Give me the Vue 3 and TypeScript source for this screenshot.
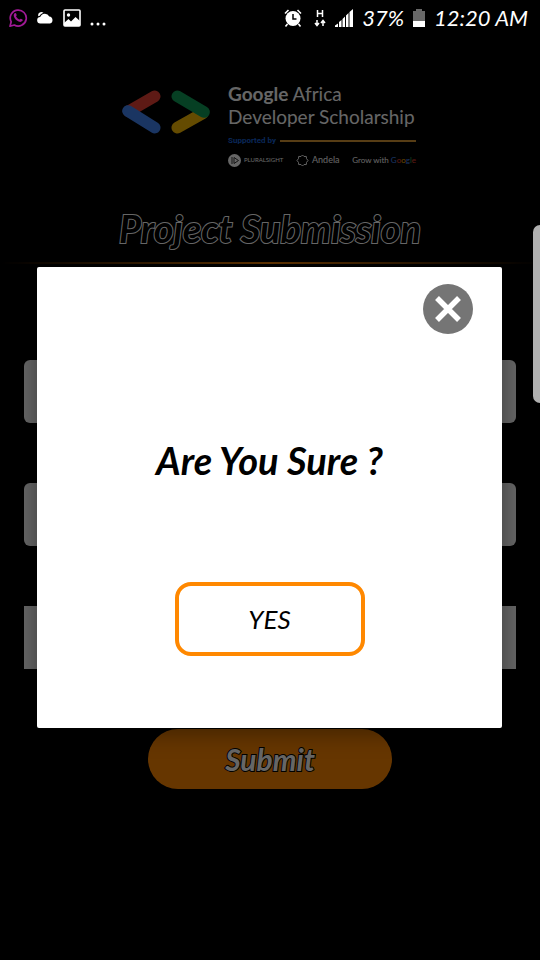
<script setup lang="ts">
import { ref } from 'vue'

const open = ref(true)
const fields = [
  { id: 'first', label: 'First name', square: false },
  { id: 'last', label: 'Last name', square: false },
  { id: 'email', label: 'Email address', square: true },
]
</script>

<template>
  <div class="screen">
    <header class="status">
      <div class="status-group left">
        <svg class="icon chat" width="20" height="20" viewBox="0 0 20 20" fill="none">
          <path d="M2 18.2l1.2-4.4A8 8 0 1 1 6.300 17z" stroke="#a11a96" stroke-width="1.700" stroke-linejoin="round" />
          <path d="M6.600 5.300c.6-.6 1.200-.4 1.500.2l.6 1.400c.2.500-.6 1-.7 1.400.7 1.500 1.900 2.700 3.400 3.300.5-.1 1-1.100 1.500-.9l1.500.8c.6.400.3 1.200-.1 1.600-1 1-2.300 1-3.700.4C8.200 12.500 6.600 10.700 5.900 8.500c-.4-1.300-.1-2.400.7-3.200z" fill="#a11a96" />
        </svg>
        <svg class="icon" width="17" height="12" viewBox="0 0 17 12" fill="#fff">
          <path d="M3.500 11.500a3.200 3.200 0 0 1-.3-6.400A5 5 0 0 1 12.300 4.500 3.600 3.600 0 0 1 13 11.500z" />
          <path d="M1.300 4.200A3.200 3.200 0 0 1 6.600 1C4.700 1.300 3.400 2.300 2.700 3.800z" />
        </svg>
        <svg class="icon" width="18" height="18" viewBox="0 0 18 18">
          <rect x="1" y="1" width="16" height="16" rx="1" fill="none" stroke="#fff" stroke-width="1.600" />
          <circle cx="5.500" cy="6" r="1.700" fill="#fff" />
          <path d="M1 14l4.500-4 2.500 2.500L12.500 8 17 12v5H1z" fill="#fff" />
        </svg>
        <svg class="icon dots" width="16" height="4" viewBox="0 0 16 4" fill="#fff">
          <circle cx="2" cy="2" r="1.500" /><circle cx="8" cy="2" r="1.500" /><circle cx="14" cy="2" r="1.500" />
        </svg>
      </div>
      <div class="status-group right">
        <svg class="icon" width="18" height="18" viewBox="0 0 18 18">
          <circle cx="9" cy="9.500" r="7.500" fill="#fff" />
          <path d="M1 4.500L4.500 1M17 4.500L13.500 1M3.500 15L1.500 17.500M14.500 15l2 2.500" stroke="#fff" stroke-width="1.600" />
          <path d="M9 5v5h3.500" fill="none" stroke="#000" stroke-width="1.500" />
        </svg>
        <svg class="icon data" width="12" height="18" viewBox="0 0 12 18" fill="none" stroke="#fff" stroke-width="1.500">
          <path d="M3.500 1v7M8.500 1v7M3.500 4.500h5" />
          <path d="M3 11v5M1 14l2 2.500L5 14M9 17v-5M7 14l2-2.500 2 2.500" />
        </svg>
        <svg class="icon" width="18" height="18" viewBox="0 0 18 18" fill="#fff">
          <path d="M0 16.500l3-2V18H0zM4 13l2.500-2v7H4zM7.500 10L10 7.500V18H7.500zM11 6.500L13.500 4v14H11zM14.500 3L18 0v18h-3.500z" />
        </svg>
        <span class="status-text">37%</span>
        <svg class="icon" width="12" height="18" viewBox="0 0 12 18">
          <path d="M3 0h6v2h3v16H0V2h3z" fill="#686868" />
          <path d="M0 12h12v6H0z" fill="#fff" />
        </svg>
        <time class="status-text">12:20 AM</time>
      </div>
    </header>

    <main class="page">
      <div class="brand">
        <svg class="mark" width="88" height="44" viewBox="36 46 264 132" fill="none" stroke-width="35" stroke-linecap="round">
          <path d="M134 65L56 110" stroke="#ea4335" />
          <path d="M54 109L134 159" stroke="#4285f4" />
          <path d="M202 159L278 116" stroke="#fbbc04" />
          <path d="M202 65L282 112" stroke="#0f9d58" />
        </svg>
        <div class="brand-text">
          <p class="brand-name"><b>Google</b> Africa<br />Developer Scholarship</p>
          <div class="support"><span>Supported by</span><i class="rule"></i></div>
          <div class="partners">
            <span class="partner">
              <svg width="13" height="13" viewBox="0 0 13 13">
                <circle cx="6.500" cy="6.500" r="6.500" fill="#fff" />
                <path d="M4 3v7M6 3.500l4.500 3L6 9.500z" fill="none" stroke="#333" />
              </svg>
              <span class="plural">PLURALSIGHT</span>
            </span>
            <span class="partner">
              <svg width="13" height="13" viewBox="0 0 13 13" fill="none" stroke="#fff">
                <path d="M6.500 1l1.500 1.500 2.300-.1.200 2.200L12 6.500l-1.500 1.900-.2 2.200-2.300-.1L6.500 12 5 10.500l-2.300.1-.2-2.200L1 6.500l1.500-1.900.2-2.200 2.300.1z" />
              </svg>
              <span>Andela</span>
            </span>
            <span class="grow">Grow with <span class="blue">G</span><span class="red">o</span><span class="yellow">o</span><span class="blue">g</span><span class="green">l</span><span class="red">e</span></span>
          </div>
        </div>
      </div>

      <h1 class="title">Project Submission</h1>
      <div class="divider"></div>

      <form class="form" @submit.prevent="open = true">
        <input
          v-for="f in fields"
          :id="f.id"
          :key="f.id"
          class="field"
          :class="{ square: f.square }"
          type="text"
          :aria-label="f.label"
        />
        <button class="submit" type="submit">Submit</button>
      </form>
    </main>

    <div v-if="open" class="overlay">
      <section class="dialog" role="dialog" aria-modal="true" aria-labelledby="question">
        <button class="close" type="button" aria-label="Close" @click="open = false">
          <svg width="50" height="50" viewBox="0 0 50 50">
            <circle cx="25" cy="25" r="25" fill="#757575" />
            <path d="M14 14l22 22M36 14l-22 22" stroke="#fff" stroke-width="5.500" />
          </svg>
        </button>
        <h2 id="question" class="question">Are You Sure ?</h2>
        <button class="yes" type="button" @click="open = false">YES</button>
      </section>
    </div>
    <div class="edge-handle"></div>
  </div>
</template>

<style>
body {
  margin: 0;
  background: #000;
}
</style>

<style scoped>
.screen {
  position: relative;
  min-height: 100vh;
  overflow: hidden;
  box-sizing: border-box;
  background: #000;
  color: #fff;
  font-family: Lato, "Open Sans", sans-serif;
}
.status {
  display: flex;
  justify-content: space-between;
  align-items: center;
  height: 36px;
  padding: 0 12px 0 8px;
}
.status-group {
  display: flex;
  align-items: center;
  gap: 9px;
}
.icon {
  display: block;
  flex: none;
}
.dots {
  align-self: flex-end;
  margin-bottom: 2px;
}
.data {
  margin-left: 3px;
}
.status-text {
  font-size: 22px;
  line-height: 24px;
  font-style: italic;
  white-space: nowrap;
}
.page {
  display: flex;
  flex-direction: column;
}
.brand {
  display: flex;
  justify-content: center;
  gap: 18px;
  padding: 46px 2px 0 0;
}
.mark {
  margin-top: 8px;
}
.brand-text {
  width: 188px;
}
.brand-name {
  margin: 0;
  font-size: 19px;
  line-height: 23px;
  white-space: nowrap;
}
.support {
  display: flex;
  align-items: center;
  gap: 4px;
  height: 12px;
  margin-top: 7px;
  color: #1a63d8;
  font: bold 8px/12px Roboto, sans-serif;
}
.rule {
  flex: 1;
  height: 2px;
  background: #d99a35;
}
.partners {
  display: flex;
  align-items: center;
  justify-content: space-between;
  margin-top: 6px;
  font-size: 9px;
  line-height: 14px;
  white-space: nowrap;
}
.partner {
  display: flex;
  align-items: center;
  gap: 3px;
}
.plural {
  font-size: 6px;
}
.grow {
  font-size: 8px;
}
.blue {
  color: #4285f4;
}
.red {
  color: #ea4335;
}
.yellow {
  color: #fbbc04;
}
.green {
  color: #34a853;
}
.title {
  margin: 37px 0 0;
  text-align: center;
  color: #000;
  font-size: 38px;
  line-height: 48px;
  font-weight: 700;
  font-style: italic;
  -webkit-text-stroke: 2px #fff;
  paint-order: stroke fill;
}
.divider {
  height: 2px;
  margin-top: 10px;
  background: linear-gradient(to right, #000, #ff8800 50%, #000);
}
.form {
  display: flex;
  flex-direction: column;
  gap: 60px;
  padding: 96px 24px 0;
}
.field {
  box-sizing: border-box;
  width: 100%;
  height: 63px;
  padding: 0 16px;
  border: 0;
  border-radius: 6px;
  background: #fff;
  font: 20px Lato, sans-serif;
}
.field.square {
  border-radius: 0;
}
.submit {
  align-self: center;
  width: 244px;
  height: 60px;
  border: 0;
  border-radius: 30px;
  background: #ff8800;
  color: #fff;
  font: italic 700 30px/36px Lato, sans-serif;
  -webkit-text-stroke: 2px #000;
  paint-order: stroke fill;
}
.overlay {
  position: absolute;
  inset: 36px 0 0;
  display: flex;
  align-items: center;
  padding: 0 38px 2px 37px;
  background: rgba(0, 0, 0, 0.6);
}
.dialog {
  flex: 1;
  display: flex;
  flex-direction: column;
  align-items: center;
  padding: 17px 29px 72px;
  border-radius: 2px;
  background: #fff;
  color: #000;
  box-shadow: 0 4px 24px rgba(0, 0, 0, 0.4);
}
.close {
  align-self: flex-end;
  width: 50px;
  height: 50px;
  padding: 0;
  border: 0;
  border-radius: 50%;
  background: none;
}
.close svg {
  display: block;
}
.question {
  margin: 104px 0 0;
  font-size: 38px;
  line-height: 44px;
  font-weight: 700;
  font-style: italic;
  white-space: nowrap;
}
.yes {
  width: 190px;
  height: 74px;
  margin-top: 100px;
  border: 4px solid #ff8800;
  border-radius: 16px;
  background: #fff;
  color: #000;
  font: italic 26px/32px Lato, sans-serif;
}
.edge-handle {
  position: absolute;
  top: 225px;
  right: 0;
  width: 7px;
  height: 178px;
  border-radius: 7px 0 0 7px;
  background: #b0b0b0;
}
</style>
